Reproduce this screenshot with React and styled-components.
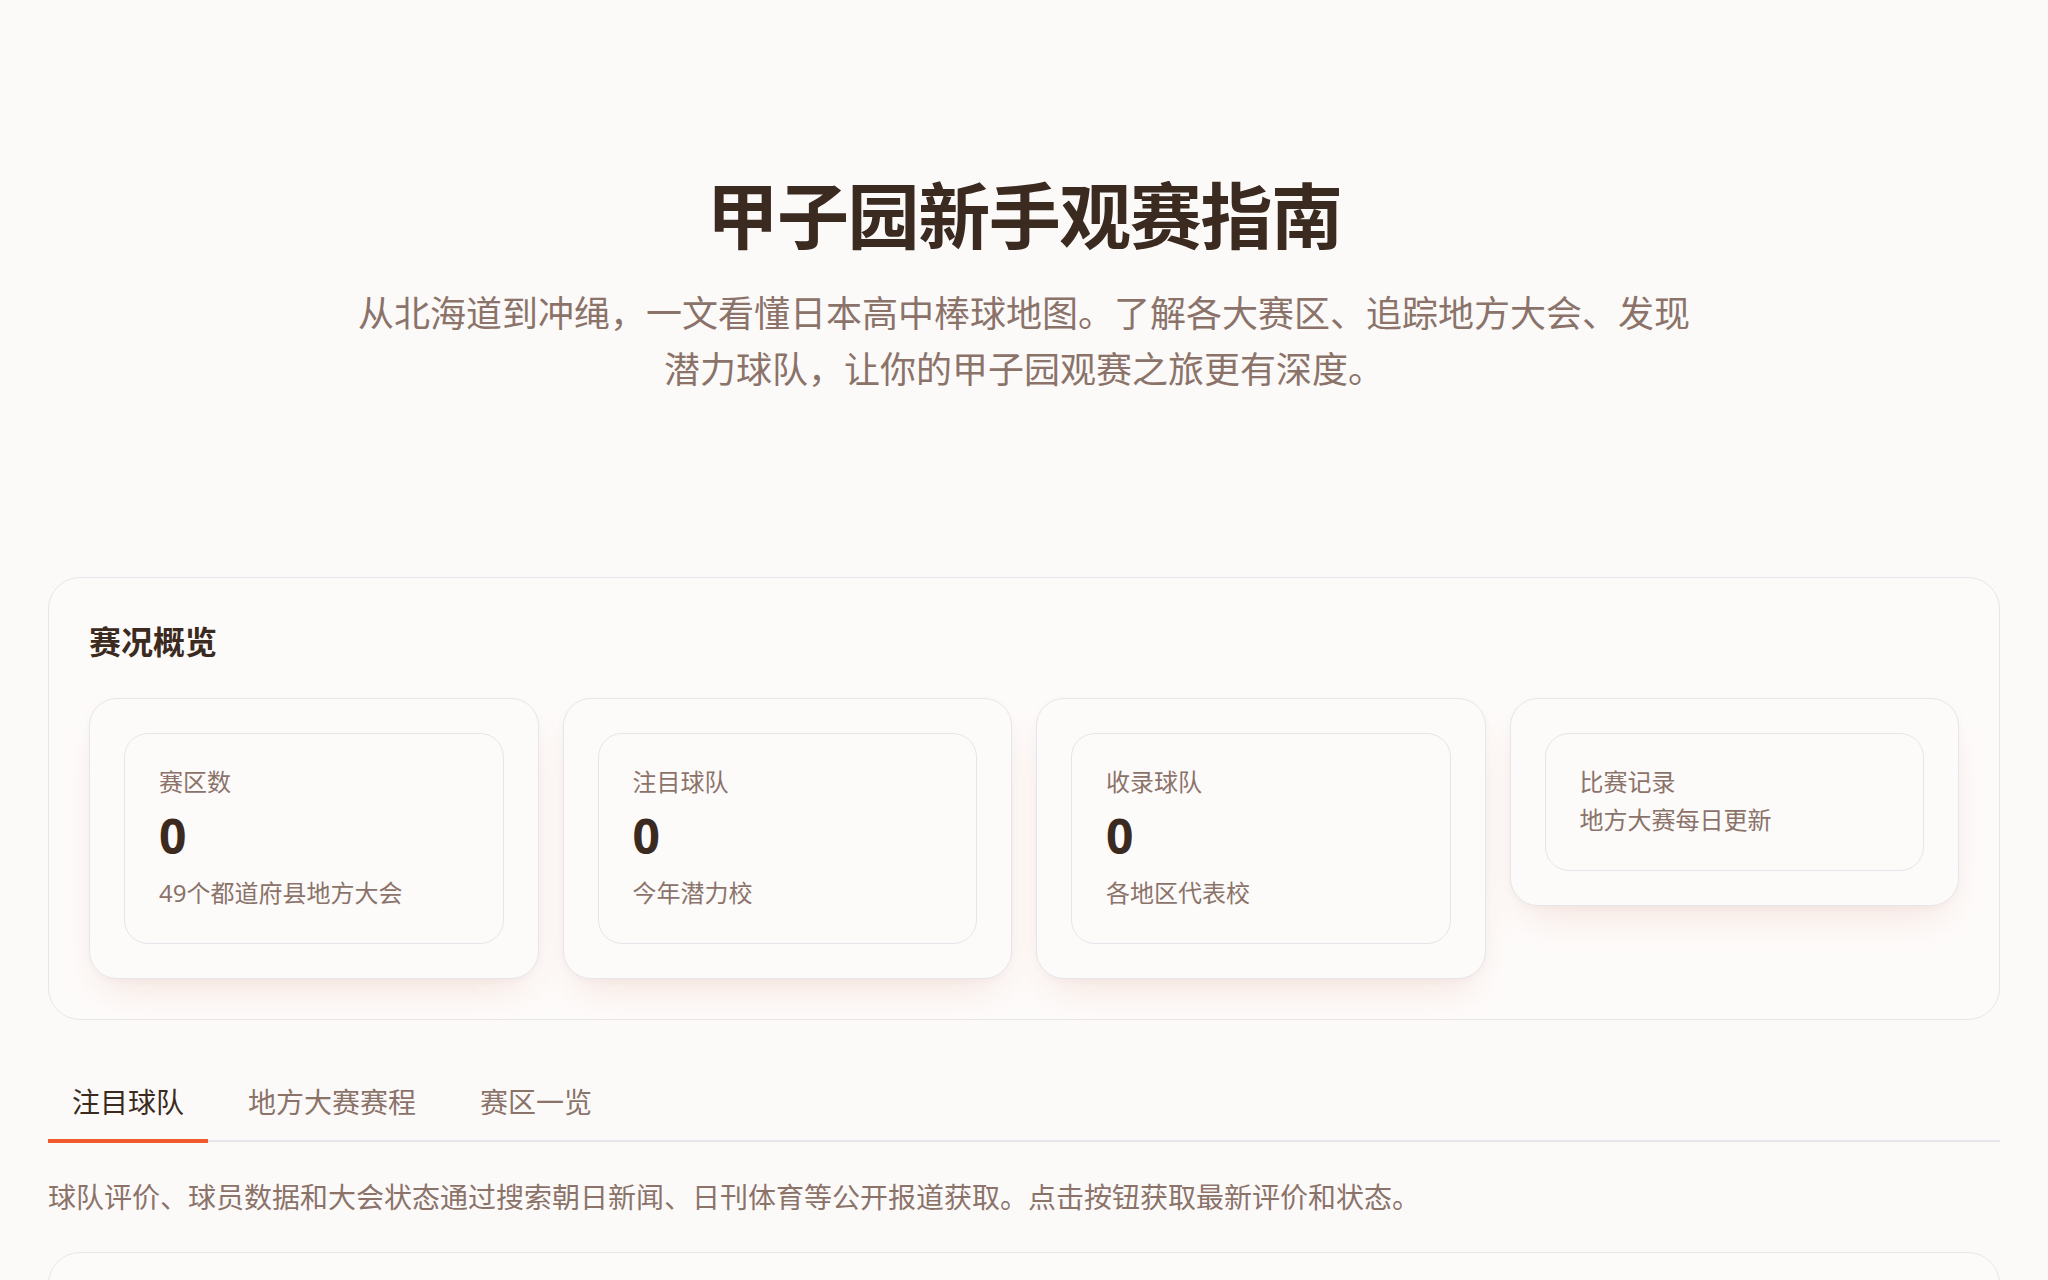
import React, { useState } from "react";
import styled, { createGlobalStyle } from "styled-components";

const GlobalStyle = createGlobalStyle`
  * { box-sizing: border-box; }
  html, body {
    margin: 0;
    padding: 0;
    background: #fcfaf9;
  }
  body {
    font-family: "Noto Sans", "Noto Sans CJK SC", sans-serif;
    color: #3b2a20;
  }
`;

const ink = "#3b2a20";
const muted = "#8b736a";
const line = "#e5e6eb";
const accent = "#ef5b2b";

const Page = styled.main`
  padding: 0 48px;
`;

const Hero = styled.header`
  text-align: center;
  padding: 172px 0 179px;
`;

const Title = styled.h1`
  margin: 0;
  font-size: 72px;
  line-height: 86px;
  font-weight: 700;
  letter-spacing: -0.02em;
  color: ${ink};
`;

const Subtitle = styled.p`
  margin: 28px auto 0;
  max-width: 1350px;
  font-size: 36px;
  line-height: 56px;
  color: ${muted};
`;

const Panel = styled.section`
  background: #fdfbfa;
  border: 1px solid ${line};
  border-radius: 32px;
  padding: 40px;
  min-height: ${(p) => p.$minHeight || "auto"};
`;

const PanelTitle = styled.h2`
  margin: 0 0 32px;
  font-size: 32px;
  line-height: 48px;
  font-weight: 700;
  color: ${ink};
`;

const StatGrid = styled.div`
  display: grid;
  grid-template-columns: repeat(4, 1fr);
  gap: 24px;
  align-items: start;
`;

const StatCard = styled.article`
  background: #fdfbfa;
  border: 1px solid ${line};
  border-radius: 28px;
  padding: 34px;
  box-shadow: 0 20px 40px -14px rgba(214, 120, 90, 0.2),
    0 2px 8px rgba(60, 40, 30, 0.03);
`;

const StatInner = styled.div`
  border: 1px solid ${line};
  border-radius: 24px;
  padding: 31px 34px 33px;
  background: #fdfbfa;
`;

const StatLabel = styled.div`
  font-size: 24px;
  line-height: 34px;
  color: ${muted};
`;

const StatValue = styled.div`
  margin-top: 8px;
  font-size: 48px;
  line-height: 58px;
  font-weight: 700;
  color: ${ink};
`;

const StatNote = styled.div`
  margin-top: ${(p) => (p.$afterValue ? "11px" : "4px")};
  font-size: 24px;
  line-height: 34px;
  color: ${muted};
`;

const TabList = styled.nav`
  margin-top: 45px;
  display: flex;
  gap: 16px;
  border-bottom: 2px solid ${line};
`;

const Tab = styled.button`
  appearance: none;
  background: none;
  border: none;
  border-bottom: 4px solid ${(p) => (p.$active ? accent : "transparent")};
  margin-bottom: -3px;
  padding: 16px 24px;
  font-family: inherit;
  font-size: 28px;
  line-height: 42px;
  color: ${(p) => (p.$active ? ink : muted)};
  cursor: pointer;
`;

const Description = styled.p`
  margin: 32px 0;
  font-size: 28px;
  line-height: 46px;
  color: ${muted};
`;

const stats = [
  { label: "赛区数", value: "0", note: "49个都道府县地方大会" },
  { label: "注目球队", value: "0", note: "今年潜力校" },
  { label: "收录球队", value: "0", note: "各地区代表校" },
  { label: "比赛记录", note: "地方大赛每日更新" },
];

const tabs = ["注目球队", "地方大赛赛程", "赛区一览"];

export default function App() {
  const [active, setActive] = useState(0);
  return (
    <>
      <GlobalStyle />
      <Page>
        <Hero>
          <Title>甲子园新手观赛指南</Title>
          <Subtitle>
            从北海道到冲绳，一文看懂日本高中棒球地图。了解各大赛区、追踪地方大会、发现潜力球队，让你的甲子园观赛之旅更有深度。
          </Subtitle>
        </Hero>

        <Panel>
          <PanelTitle>赛况概览</PanelTitle>
          <StatGrid>
            {stats.map((s) => (
              <StatCard key={s.label}>
                <StatInner>
                  <StatLabel>{s.label}</StatLabel>
                  {s.value !== undefined && <StatValue>{s.value}</StatValue>}
                  <StatNote $afterValue={s.value !== undefined}>{s.note}</StatNote>
                </StatInner>
              </StatCard>
            ))}
          </StatGrid>
        </Panel>

        <TabList>
          {tabs.map((t, i) => (
            <Tab key={t} $active={i === active} onClick={() => setActive(i)}>
              {t}
            </Tab>
          ))}
        </TabList>

        <Description>
          球队评价、球员数据和大会状态通过搜索朝日新闻、日刊体育等公开报道获取。点击按钮获取最新评价和状态。
        </Description>

        <Panel $minHeight="360px" />
      </Page>
    </>
  );
}
